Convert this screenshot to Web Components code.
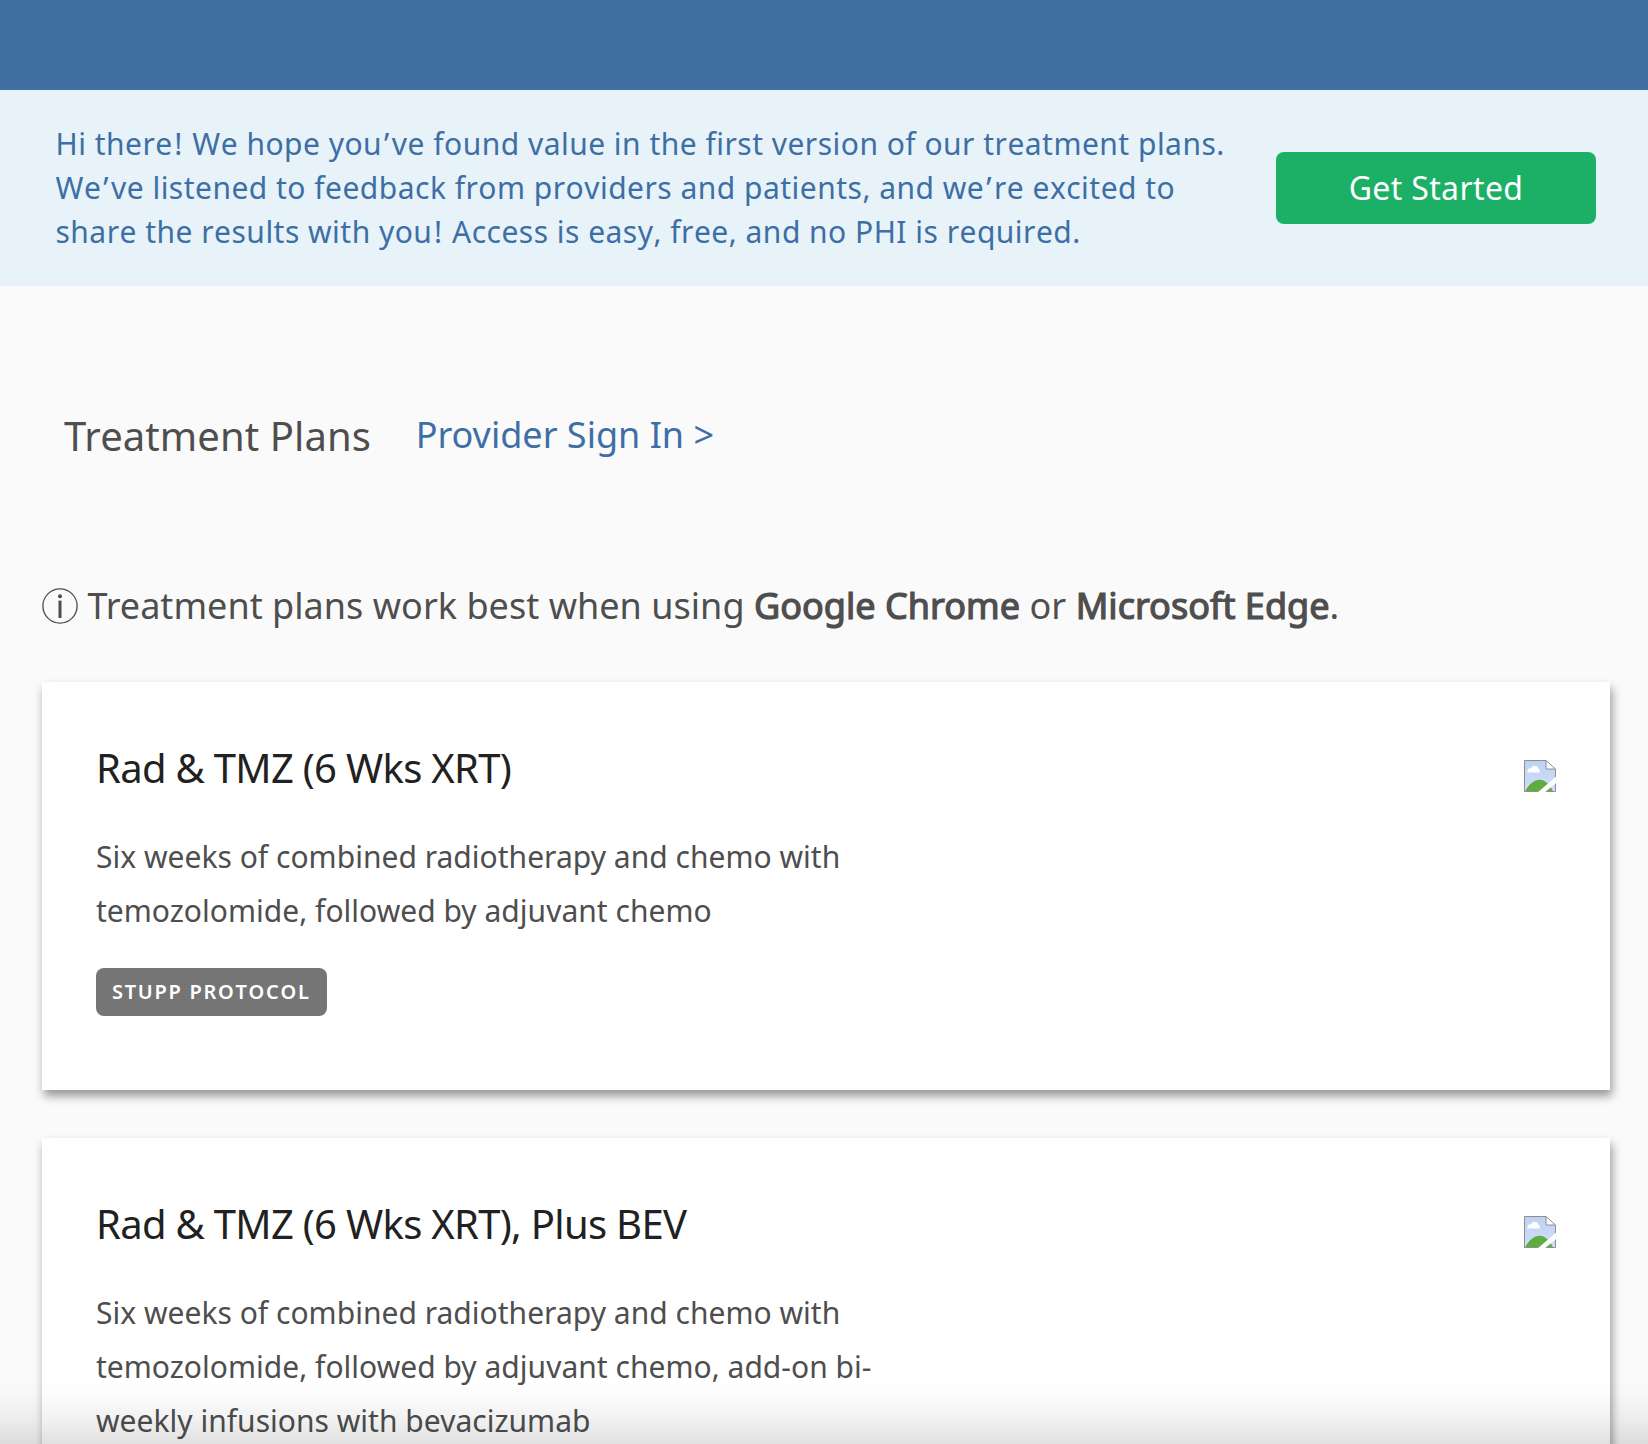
<!DOCTYPE html>
<html lang="en">
<head>
<meta charset="utf-8">
<title>Treatment Plans</title>
<style>
html,body{margin:0;background:#fafafa}
body{height:1444px;overflow:hidden;font-family:"Noto Sans",sans-serif;color:#4e4e4e}
</style>
</head>
<body>
<plans-page>
  <promo-banner slot="banner" action="Get Started">Hi there<b>!</b> We hope you<i>’</i>ve found value in the first version of our treatment plans.<br>We<i>’</i>ve listened to feedback from providers and patients, and we<i>’</i>re excited to<br>share the results with you<b>!</b> Access is easy, free, and no PHI is required.</promo-banner>
  <page-heading link="Provider Sign In &gt;">Treatment Plans</page-heading>
  <browser-notice></browser-notice>
  <plan-card><span slot="title">Rad &amp; TMZ (6 Wks XRT)</span>Six weeks of combined radiotherapy and chemo with<br>temozolomide, followed by adjuvant chemo<plan-tag slot="tag">STUPP PROTOCOL</plan-tag></plan-card>
  <plan-card><span slot="title">Rad &amp; TMZ (6 Wks XRT), Plus BEV</span>Six weeks of combined radiotherapy and chemo with<br>temozolomide, followed by adjuvant chemo, add-on bi-<br>weekly infusions with bevacizumab</plan-card>
</plans-page>
<script>
const define = (name, render) => customElements.define(name, class extends HTMLElement {
  connectedCallback() {
    if (this.shadowRoot) return;
    this.attachShadow({ mode: 'open' }).innerHTML = render(this);
  }
});
const esc = s => (s || '').replace(/&/g, '&amp;').replace(/</g, '&lt;').replace(/>/g, '&gt;');

define('plans-page', () => `
<style>
:host{display:block;position:relative;height:1444px;overflow:hidden}
.bar{height:90px;background:#3f6fa0}
main{display:flex;flex-direction:column;padding:0 38px 0 42px}
.fade{position:absolute;left:0;right:0;bottom:0;height:64px;pointer-events:none;
background:linear-gradient(to bottom,rgba(0,0,0,0) 0%,rgba(0,0,0,.015) 25%,rgba(0,0,0,.05) 60%,rgba(0,0,0,.12) 100%)}
</style>
<header class="bar"></header>
<slot name="banner"></slot>
<main><slot></slot></main>
<div class="fade"></div>`);

define('promo-banner', el => `
<style>
:host{display:flex;align-items:center;justify-content:space-between;box-sizing:border-box;height:196px;padding:0 52px 0 55.5px;background:#e7f3f9}
p{margin:0;font-size:30px;line-height:44px;letter-spacing:.48px;font-kerning:none;color:#3d6fa5;white-space:nowrap}
::slotted(i){font-style:normal;margin:0 2px}
::slotted(b){font-weight:400;margin:0 1.2px 0 1.6px}
button{width:320px;height:72px;padding:0;border:0;border-radius:8px;background:#1cb067;color:#fff;font:32px/72px "Noto Sans",sans-serif;font-kerning:none;letter-spacing:.35px}
</style>
<p><slot></slot></p><button>${esc(el.getAttribute('action'))}</button>`);

define('page-heading', el => `
<style>
:host{display:flex;align-items:flex-start;gap:44.5px;padding:108px 0 0 22px;height:187px;box-sizing:content-box}
h1{margin:15px 0 0;font-size:40px;line-height:54px;font-weight:400;letter-spacing:.09px}
a{margin-top:16px;font-size:36px;line-height:50px;color:#3d6fa5}
</style>
<h1><slot></slot></h1><a>${esc(el.getAttribute('link'))}</a>`);

define('browser-notice', () => `
<style>
:host{display:flex;align-items:center;height:50px;font-size:36px;line-height:50px;margin-bottom:51px;white-space:pre;letter-spacing:.03px}
svg{flex:none;width:36px;height:36px;margin:-1px 9.4px 0 0}
b{font-weight:400;-webkit-text-stroke:1.2px currentColor}
</style>
<svg viewBox="0 0 36 36" fill="none" stroke="#4e4e4e" aria-hidden="true"><circle cx="18" cy="18" r="17.1" stroke-width="1.3"/><circle cx="18" cy="8.2" r="2" fill="#4e4e4e" stroke="none"/><path d="M18 12.600V30" stroke-width="3"/></svg><span>Treatment plans work best when using <b>Google Chrome</b> or <b>Microsoft Edge</b>.</span>`);

define('plan-card', () => `
<style>
:host{display:flex;justify-content:space-between;box-sizing:border-box;height:408px;margin-bottom:48px;padding:58px 54px 0;background:#fff;box-shadow:2px 6px 9px rgba(0,0,0,.4)}
h2{margin:0 0 35px;font-size:40px;line-height:55px;font-weight:400;letter-spacing:-.7px;color:#212121}
p{margin:0 0 30px;font-size:30px;line-height:54px;letter-spacing:.02px;white-space:nowrap}
svg{flex:none;width:32px;height:32px;margin-top:20px}
</style>
<div><h2><slot name="title"></slot></h2><p><slot></slot></p><slot name="tag"></slot></div>
<svg viewBox="0 0 32 32" aria-hidden="true">
<defs><linearGradient id="sky" x1="0" y1="0" x2="0" y2="1"><stop offset="0" stop-color="#bed2f2"/><stop offset="1" stop-color="#d0def7"/></linearGradient></defs>
<path d="M.5.5H22L31.500 9V31.500H.5Z" fill="url(#sky)"/>
<path d="M3.500 12.500c-.6-2.800 1.200-4.400 3.600-4.200C8 5.200 13.400 4.800 14 8.200c1.700.4 2.200 2.400 1.600 4.300Z" fill="#fff"/>
<path d="M1 31.500C4.500 24.500 10 19.700 15.500 19.700c5.500 0 10.500 4.800 13.500 11.800Z" fill="#5fac41"/>
<path d="M22 .5V9H31.500Z" fill="#fff"/>
<path d="M.5.5H22L31.500 9V31.500H.5Z M22 .5V9H31.500" fill="none" stroke="#8f8f8f"/>
<path d="M13.500 32.500 33 16v6.500L20.500 32.500Z" fill="#fff"/>
</svg>`);

define('plan-tag', () => `
<style>
:host{display:inline-block;box-sizing:border-box;width:231px;height:48px;padding-left:16px;border-radius:8px;background:#757575;color:#fff;font-size:20px;font-weight:600;font-kerning:none;line-height:47px;letter-spacing:1.72px;white-space:nowrap}
</style><slot></slot>`);
</script>
</body>
</html>
